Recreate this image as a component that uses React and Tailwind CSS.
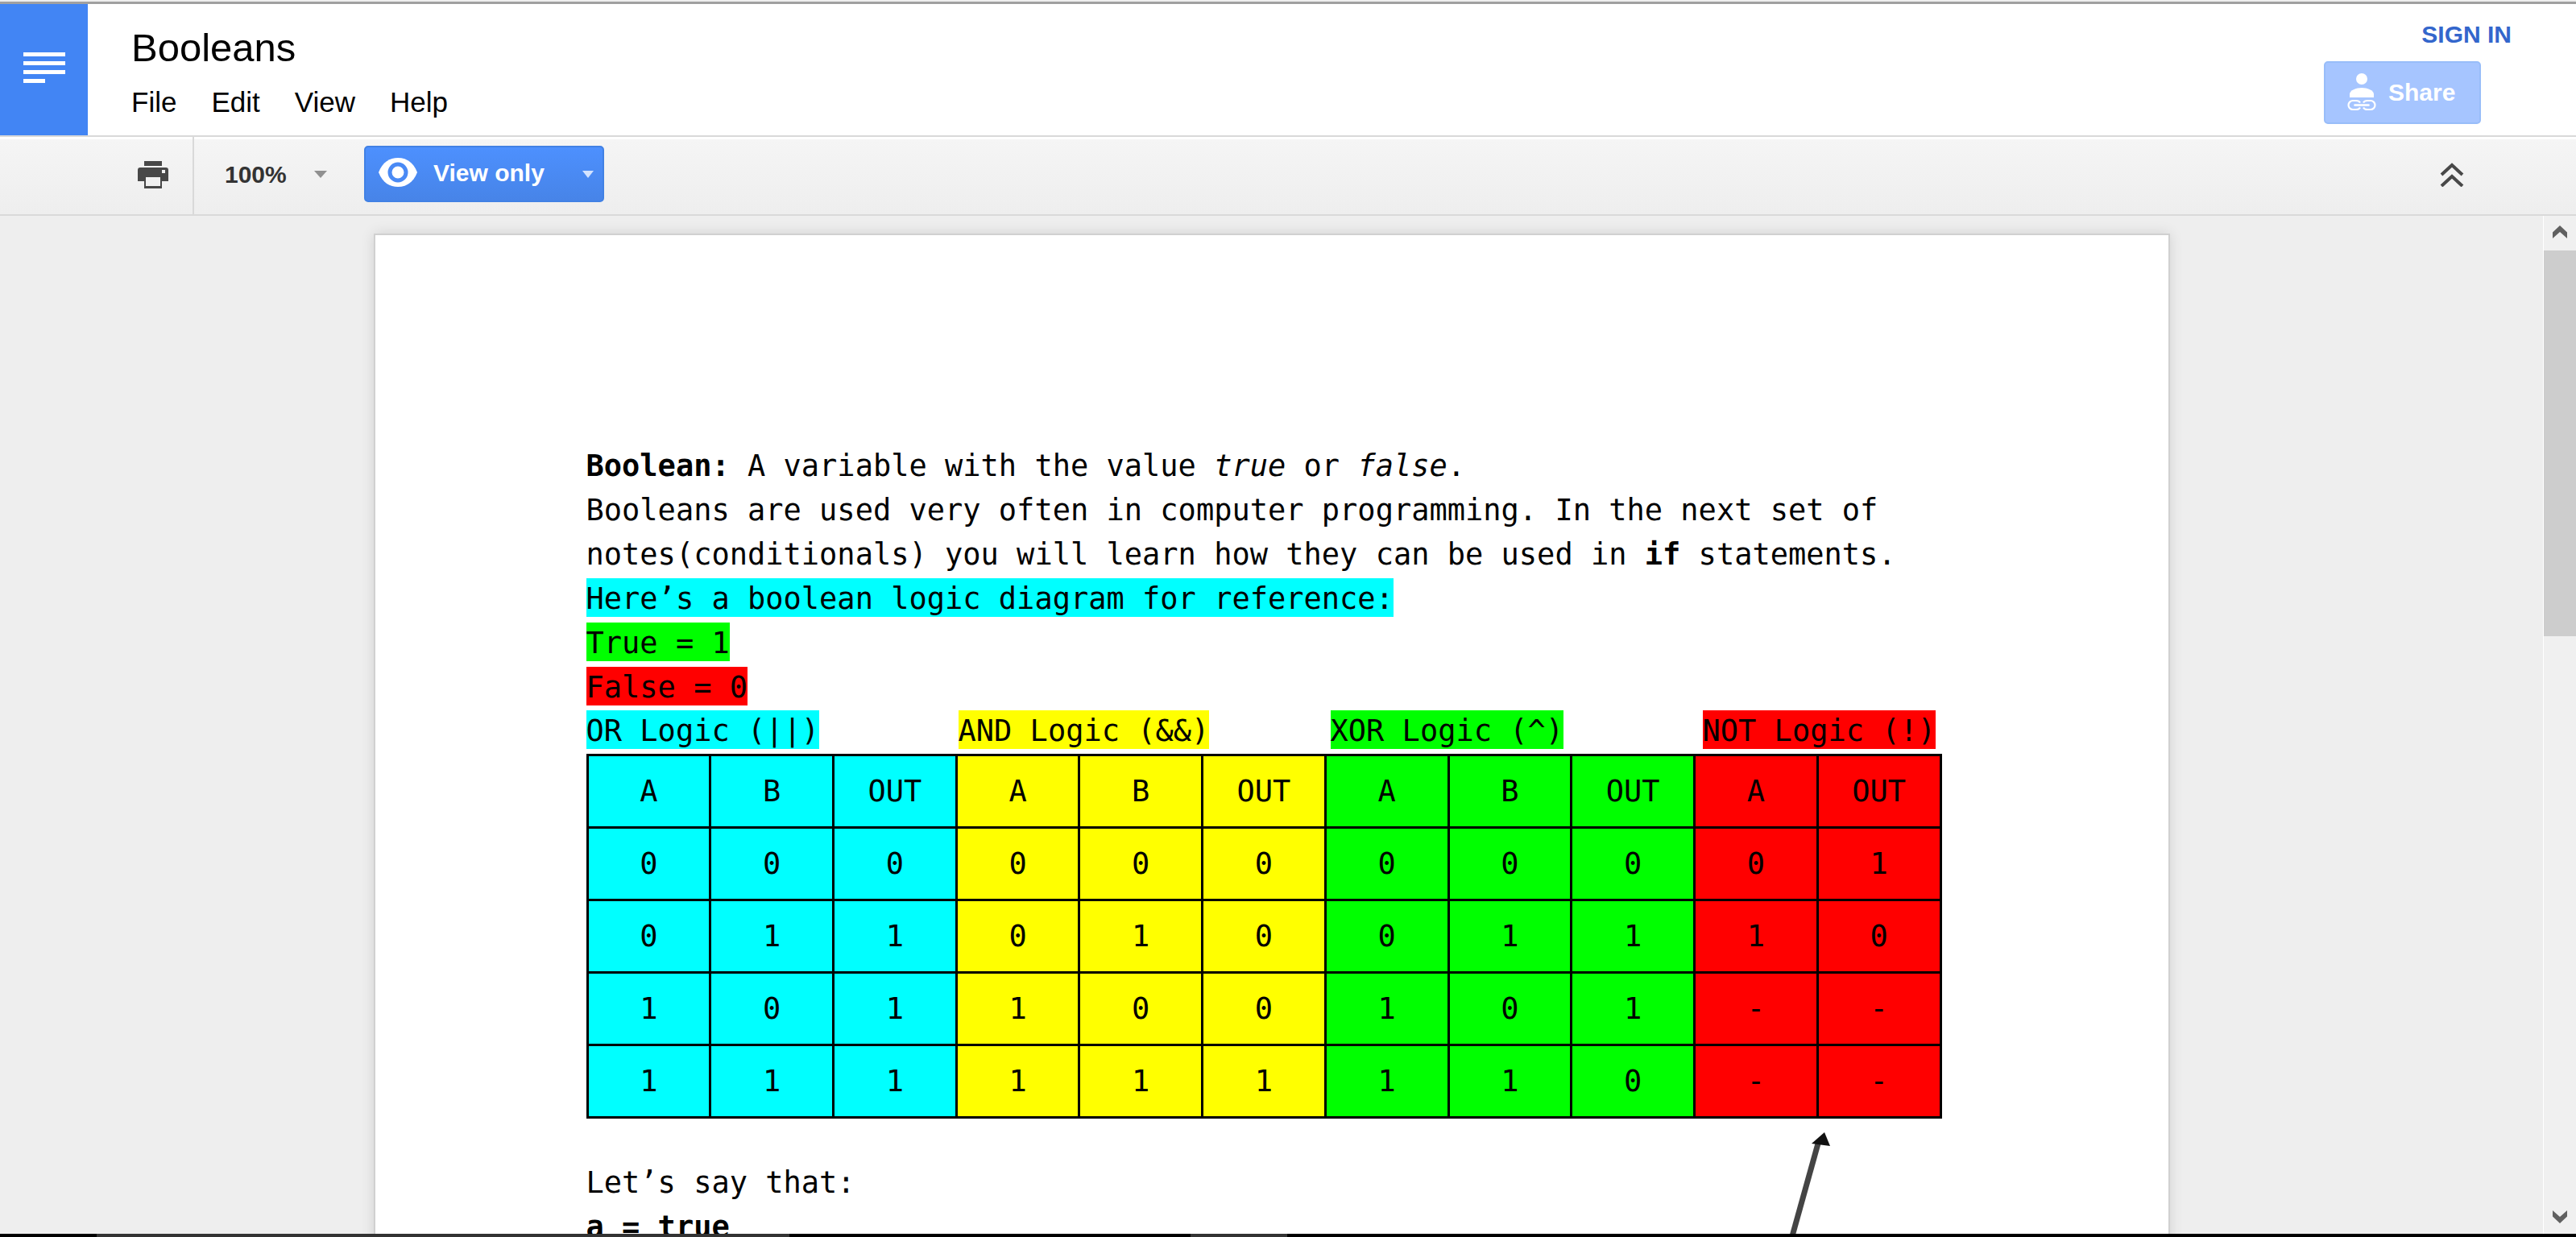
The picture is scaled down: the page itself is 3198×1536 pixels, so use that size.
const groups = [
  { label: 'OR Logic (||)', bg: 'bg-[#00ffff]', cols: ['A', 'B', 'OUT'], rows: ['000', '011', '101', '111'] },
  { label: 'AND Logic (&&)', bg: 'bg-[#ffff00]', cols: ['A', 'B', 'OUT'], rows: ['000', '010', '100', '111'] },
  { label: 'XOR Logic (^)', bg: 'bg-[#00ff00]', cols: ['A', 'B', 'OUT'], rows: ['000', '011', '101', '110'] },
  { label: 'NOT Logic (!)', bg: 'bg-[#ff0000]', cols: ['A', 'OUT'], rows: ['01', '10', '--', '--'] },
];

function Mark({ className, children }) {
  return <mark className={`pt-1 pb-px text-black ${className}`}>{children}</mark>;
}

function Header() {
  return (
    <header className="flex h-[165px] border-b-2 border-[#d9d9d9] bg-white">
      <a href="#home" aria-label="Docs home" className="flex w-[109px] shrink-0 justify-center bg-[#4285f4] pt-[59px]">
        <svg width="52" height="40" viewBox="0 0 52 40" fill="#fff" aria-hidden="true">
          <path d="M0 1h52v5H0zM0 12h52v5H0zM0 23h52v5H0zM0 34h27v5H0z" />
        </svg>
      </a>
      <div className="flex grow flex-col pl-[54px] pt-[24px]">
        <h1 className="text-[49px] leading-[60px] text-black">Booleans</h1>
        <nav className="mt-[18px] flex gap-[43px] text-[35px] leading-[40px] text-black">
          <button>File</button>
          <button>Edit</button>
          <button>View</button>
          <button>Help</button>
        </nav>
      </div>
      <div className="flex flex-col items-end pt-[20px]">
        <a href="#signin" className="mr-[80px] text-[30px] font-bold leading-[36px] text-[#3366cc]">SIGN IN</a>
        <button className="mr-[118px] mt-[15px] flex h-[78px] w-[195px] items-center rounded-[5px] border-2 border-[#98bdf9] bg-[#a6c5ff] pb-[2px] pl-[27px] text-[30px] font-bold text-white">
          <svg width="36" height="48" viewBox="0 0 36 48" fill="none" aria-hidden="true">
            <circle cx="18" cy="8" r="7" fill="#fff" />
            <path d="M3 31v-4c0-5 8-8 15-8s15 3 15 8v4z" fill="#fff" />
            <path d="M16 37.500C15 35.500 13 35 11 35H7a5.500 5.500 0 0 0 0 11h4c2 0 4-.5 5-2.500M20 37.500c1-2 3-2.500 5-2.500h4a5.500 5.500 0 0 1 0 11h-4c-2 0-4-.5-5-2.500" stroke="#fff" strokeWidth="2.200" />
            <path d="M9.500 40.500h17" stroke="#fff" strokeWidth="2.600" strokeLinecap="round" />
          </svg>
          <span className="ml-[15px]">Share</span>
        </button>
      </div>
    </header>
  );
}

function Toolbar() {
  return (
    <div className="h-[98px] border-b-2 border-[#d9d9d9]">
      <div className="flex h-full items-stretch border-t-[3px] border-white bg-linear-to-b from-[#f5f5f5] to-[#eeeeee] bg-clip-padding">
        <button aria-label="Print" className="-mt-[3px] flex w-[241px] items-center justify-end border-r-2 border-[#d9d9d9] pr-[30px] pb-[3px]">
          <svg width="38" height="34" viewBox="0 0 38 34" fill="#484848" aria-hidden="true">
            <path d="M8 0h22v6H8z" />
            <path fillRule="evenodd" d="M3 8h32q3 0 3 3v14h-8v9H8v-9H0V11q0-3 3-3zM10 20v11h18V20zM30 11v4h4v-4z" />
          </svg>
        </button>
        <button className="flex w-[211px] items-center pb-[6px] pl-[38px] text-[30px] font-bold text-[#333]">
          100%
          <svg className="ml-[34px]" width="16" height="9" viewBox="0 0 16 9" aria-hidden="true"><path d="M0 0h16L8 9z" fill="#909090" /></svg>
        </button>
        <button className="mt-[8px] flex h-[70px] w-[298px] items-center rounded-[5px] border-2 border-[#4181e4] bg-linear-to-b from-[#4d90fe] to-[#4784e8] pb-[4px] text-[30px] font-bold text-white">
          <svg className="ml-[16px]" width="48" height="38" viewBox="0 0 48 38" aria-hidden="true">
            <path d="M0 19C5 6 14 1 24 1s19 5 24 18c-5 13-14 18-24 18S5 32 0 19z" fill="#fff" />
            <circle cx="24" cy="19" r="10" fill="#fff" stroke="#4a8af5" strokeWidth="5" />
          </svg>
          <span className="ml-[20px]">View only</span>
          <svg className="ml-auto mr-[11px] mt-[4px]" width="14" height="9" viewBox="0 0 14 9" aria-hidden="true"><path d="M0 0h14L7 9z" fill="#d3e3ff" /></svg>
        </button>
        <button aria-label="Hide the menus" className="ml-auto mr-[138px] flex items-center pb-[8px]">
          <svg width="32" height="32" viewBox="0 0 32 32" fill="none" stroke="#484848" strokeWidth="4" aria-hidden="true">
            <path d="M3 17 16 5l13 12M3 31l13-12 13 12" />
          </svg>
        </button>
      </div>
    </div>
  );
}

function LogicTable() {
  return (
    <table className="mt-px w-[1683px] table-fixed border-collapse text-center leading-[55px]">
      <thead>
        <tr className="h-[90px]">
          {groups.map((g) =>
            g.cols.map((c, i) => (
              <th key={g.label + i} scope="col" className={`border-[3px] border-black p-0 text-center font-normal ${g.bg}`}>{c}</th>
            ))
          )}
        </tr>
      </thead>
      <tbody>
        {[0, 1, 2, 3].map((r) => (
          <tr key={r} className="h-[90px]">
            {groups.map((g) =>
              [...g.rows[r]].map((v, i) => (
                <td key={g.label + i} className={`border-[3px] border-black p-0 ${g.bg}`}>{v}</td>
              ))
            )}
          </tr>
        ))}
      </tbody>
    </table>
  );
}

function Document() {
  return (
    <article className="relative mx-auto w-full max-w-[2230px] border-2 border-[#d0d0d0] bg-white px-[262px] pb-24 pt-[259px] font-['DejaVu_Sans_Mono',monospace] text-[37px] leading-[55px] text-black shadow-[0_0_16px_rgba(0,0,0,0.12)]">
      <p><b>Boolean:</b> A variable with the value <i>true</i> or <i>false</i>.</p>
      <p>
        Booleans are used very often in computer programming. In the next set of
        notes(conditionals) you will learn how they can be used in <b>if</b> statements.
      </p>
      <p><Mark className="bg-[#00ffff]">Here’s a boolean logic diagram for reference:</Mark></p>
      <p><Mark className="bg-[#00ff00]">True = 1</Mark></p>
      <p><Mark className="bg-[#ff0000]">False = 0</Mark></p>
      <div className="grid grid-cols-[repeat(4,462px)] leading-[54px]">
        {groups.map((g) => (
          <p key={g.label} className="whitespace-nowrap"><Mark className={g.bg}>{g.label}</Mark></p>
        ))}
      </div>
      <LogicTable />
      <div className="relative pt-[52px]">
        <svg className="absolute left-[1480px] top-[16px]" width="70" height="190" viewBox="0 0 70 190" aria-hidden="true">
          <path d="M49 15 10 155" stroke="#444" strokeWidth="7" fill="none" />
          <path d="M57 1 64 18 41 15z" fill="#111" />
        </svg>
        <p>Let’s say that:</p>
        <p className="font-bold">a = true</p>
      </div>
    </article>
  );
}

function Scrollbar() {
  return (
    <div className="flex w-[41px] shrink-0 flex-col border-l border-white bg-[#f0f0f0]" aria-hidden="true">
      <div className="flex h-[43px] shrink-0 items-start justify-center pt-[12px]">
        <svg width="18" height="16" viewBox="0 0 18 16"><path d="M0 8.500 9 0l9 8.500V16L9 8l-9 8z" fill="#606060" /></svg>
      </div>
      <div className="h-[479px] bg-[#cdcdcd]" />
      <div className="mt-auto flex h-[43px] shrink-0 items-start justify-center pt-[14px]">
        <svg width="18" height="16" viewBox="0 0 18 16"><path d="M0 7.500 9 16l9-8.500V0L9 8 0 0z" fill="#606060" /></svg>
      </div>
    </div>
  );
}

export default function App() {
  return (
    <div className="flex h-screen flex-col overflow-hidden bg-[#eeeeee] font-['Liberation_Sans',Arial,sans-serif]">
      <div className="h-[5px] shrink-0 border-b-[3px] border-[#a0a0a0] bg-[#eeeeee]" />
      <div className="shrink-0"><Header /></div>
      <div className="shrink-0"><Toolbar /></div>
      <div className="flex min-h-0 grow">
        <main className="min-w-0 grow overflow-hidden pt-[22px]"><Document /></main>
        <Scrollbar />
      </div>
      <div className="flex h-1 shrink-0 bg-black">
        <div className="ml-[120px] w-[860px] bg-[#333]" />
        <div className="ml-[498px] w-[120px] bg-[#333]" />
      </div>
    </div>
  );
}
